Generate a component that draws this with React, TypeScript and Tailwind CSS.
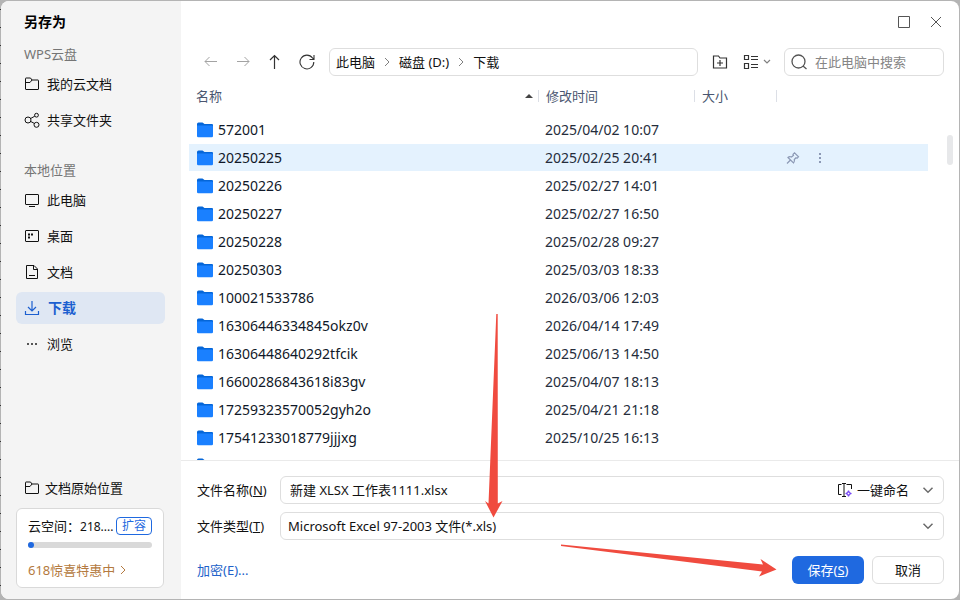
import type { ReactNode } from "react";

const files = [
  { name: "572001", date: "2025/04/02 10:07" },
  { name: "20250225", date: "2025/02/25 20:41", active: true },
  { name: "20250226", date: "2025/02/27 14:01" },
  { name: "20250227", date: "2025/02/27 16:50" },
  { name: "20250228", date: "2025/02/28 09:27" },
  { name: "20250303", date: "2025/03/03 18:33" },
  { name: "100021533786", date: "2026/03/06 12:03" },
  { name: "16306446334845okz0v", date: "2026/04/14 17:49" },
  { name: "16306448640292tfcik", date: "2025/06/13 14:50" },
  { name: "16600286843618i83gv", date: "2025/04/07 18:13" },
  { name: "17259323570052gyh2o", date: "2025/04/21 21:18" },
  { name: "17541233018779jjjxg", date: "2025/10/25 16:13" },
  { name: "", date: "" },
];

function Icon({ children, className = "" }: { children: ReactNode; className?: string }) {
  return (
    <svg
      width="16"
      height="16"
      viewBox="0 0 16 16"
      fill="none"
      stroke="currentColor"
      strokeWidth="1"
      aria-hidden="true"
      className={`shrink-0 ${className}`}
    >
      {children}
    </svg>
  );
}

const folderOutline = (
  <Icon>
    <path d="M1.500 13v-10.500q0-.5.5-.5h4.500l1.500 2H14q.5 0 .5.5v8.500q0 .5-.5.5H2q-.5 0-.5-.5zM1.500 6.500h4.500L8 4" />
  </Icon>
);

const chevronDown = (
  <Icon>
    <path d="M3.5 5.8 8 10.2l4.5-4.4" strokeWidth="1.5" />
  </Icon>
);

const crumbArrow = (
  <svg width="6" height="10" viewBox="0 0 6 10" fill="none" stroke="#808080" aria-hidden="true">
    <path d="M1 1l4 4-4 4" />
  </svg>
);

function FolderIcon() {
  return (
    <svg width="16" height="16" viewBox="0 0 16 16" aria-hidden="true" className="shrink-0">
      <path d="M0 2q0-1.5 1.5-1.5h4L7.5 2H15q1 0 1 1v4H0z" fill="#0566d8" />
      <path d="M0 3.5h15q1 0 1 1V14q0 1.3-1.3 1.3H1.3Q0 15.300 0 14z" fill="#1a80ff" />
    </svg>
  );
}

function NavItem({ icon, label, active }: { icon: ReactNode; label: string; active?: boolean }) {
  return (
    <button
      type="button"
      className={
        active
          ? "flex h-8 w-full items-center gap-2 rounded-md bg-[#dfe7f3] pl-2 text-sm font-bold text-[#1c5fd0]"
          : "flex h-8 w-full items-center gap-[7px] rounded-md pl-2 text-[#111]"
      }
    >
      {icon}
      {label}
    </button>
  );
}

function Sidebar() {
  return (
    <aside className="flex w-[180px] shrink-0 flex-col bg-[#f4f4f4] pt-[11px] pr-4 pb-[11px] pl-[15px]">
      <h1 className="pl-2 text-sm leading-5 font-bold text-black">另存为</h1>
      <h2 className="mt-3 mb-1 pl-2 leading-5 text-[#757575]">WPS云盘</h2>
      <nav className="flex flex-col gap-1">
        <NavItem label="我的云文档" icon={folderOutline} />
        <NavItem
          label="共享文件夹"
          icon={
            <Icon>
              <circle cx="4" cy="8" r="3" />
              <circle cx="12.500" cy="3.200" r="1.900" />
              <circle cx="12.500" cy="12.800" r="2.500" />
              <path d="M6.600 6.500 10.800 4.200M6.600 9.400l3.700 2" />
            </Icon>
          }
        />
      </nav>
      <h2 className="mt-6 mb-1 pl-2 leading-5 text-[#757575]">本地位置</h2>
      <nav className="flex flex-col gap-1">
        <NavItem
          label="此电脑"
          icon={
            <Icon>
              <rect x="1.500" y="2.500" width="13" height="10" rx=".5" />
              <path d="M5 14.500h6" />
            </Icon>
          }
        />
        <NavItem
          label="桌面"
          icon={
            <Icon>
              <rect x="1.500" y="2.500" width="13" height="11" rx=".5" />
              <path d="M4 6.500h2M7 6.500h2M4 9.500h2" strokeWidth="2" />
            </Icon>
          }
        />
        <NavItem
          label="文档"
          icon={
            <Icon>
              <path d="M2.500 1.500h7.500l3.500 3.500v9.500h-11zM9.500 1.500v4h4M5 11.500h6" />
            </Icon>
          }
        />
        <NavItem
          active
          label="下载"
          icon={
            <Icon>
              <path d="M1.500 11v3.500h13V11M8 1v9.500M4 7l4 4 4-4" strokeWidth="1.200" />
            </Icon>
          }
        />
        <NavItem
          label="浏览"
          icon={
            <Icon>
              <path d="M3 8h2M7 8h2M11 8h2" strokeWidth="2" stroke="#555" />
            </Icon>
          }
        />
      </nav>
      <div className="mt-auto">
        <button type="button" className="flex h-8 w-full items-center gap-[5px] pl-2 text-[#111]">
          {folderOutline}
          文档原始位置
        </button>
        <section className="mt-1 mr-px flex h-20 flex-col rounded-md border border-[#d9d9d9] bg-white px-[11px] pt-2">
          <div className="flex h-[18px] items-center justify-between">
            <span className="min-w-0 whitespace-nowrap text-[#111]">
              云空间：<span className="text-xs">218....</span>
            </span>
            <button
              type="button"
              className="h-[18px] w-9 shrink-0 rounded-[4px] border border-[#1f69e0] text-xs leading-4 text-[#1f69e0]"
            >
              扩容
            </button>
          </div>
          <div className="mt-[7px] h-[6px] rounded-full bg-[#d9d9d9]">
            <div className="h-[6px] w-[6px] rounded-full bg-[#1f69e0]" />
          </div>
          <a href="#promo" className="mt-3 flex items-center gap-[5px] leading-5 text-[#b47a40]">
            618惊喜特惠中
            <svg width="6" height="10" viewBox="0 0 6 10" fill="none" stroke="currentColor" aria-hidden="true">
              <path d="M1 1l4 4-4 4" />
            </svg>
          </a>
        </section>
      </div>
    </aside>
  );
}

function Toolbar() {
  return (
    <div className="flex h-7 items-center pr-[15px] pl-[22px] text-[#333]">
      <div className="flex gap-4">
        <button type="button" aria-label="后退" className="text-[#a3a3a3]">
          <Icon>
            <path d="M14 7.500H2M6.500 3 2 7.500 6.500 12" />
          </Icon>
        </button>
        <button type="button" aria-label="前进" className="text-[#a3a3a3]">
          <Icon>
            <path d="M2 7.500h12M9.500 3 14 7.500 9.500 12" />
          </Icon>
        </button>
        <button type="button" aria-label="上一级">
          <Icon>
            <path d="M7.500 15V1.500M3 6l4.500-4.500L12 6" strokeWidth="1.200" />
          </Icon>
        </button>
        <button type="button" aria-label="刷新">
          <Icon>
            <path d="M14.800 8a6.900 6.900 0 1 1-1.300-4L15 5.500M15 1v4.500h-4.500" strokeWidth="1.100" />
          </Icon>
        </button>
      </div>
      <nav
        aria-label="路径"
        className="ml-[14px] flex h-7 min-w-0 flex-1 items-center gap-[9px] rounded-md border border-[#dedede] pl-[6px] text-[#111]"
      >
        <a href="#pc">此电脑</a>
        {crumbArrow}
        <a href="#d">磁盘 (D:)</a>
        {crumbArrow}
        <a href="#downloads">下载</a>
      </nav>
      <button type="button" aria-label="新建文件夹" className="ml-[14px]">
        <Icon>
          <path d="M1.500 2h5l1.500 2h6.500v10h-13zM8 6v6M5 9h6" strokeWidth="1.200" />
        </Icon>
      </button>
      <button type="button" aria-label="视图" className="ml-[15px] flex items-center gap-1">
        <Icon>
          <path
            d="M1.500 1.500h4v4h-4zM1.500 9.500h4v5h-4zM8 2.500h7M8 5.500h7M8 10.500h7M8 13.500h7"
            strokeWidth="1.200"
          />
        </Icon>
        <svg width="8" height="6" viewBox="0 0 8 6" fill="none" stroke="#808080" aria-hidden="true">
          <path d="M1 1l3 3 3-3" strokeWidth="1.200" />
        </svg>
      </button>
      <label className="ml-[13px] flex h-7 w-40 items-center gap-2 rounded-md border border-[#dedede] pl-[6px] text-[#555]">
        <Icon>
          <circle cx="7.500" cy="7.500" r="6.500" strokeWidth="1.300" />
          <path d="M12 12l3.500 3" strokeWidth="1.300" />
        </Icon>
        <input
          type="search"
          aria-label="搜索"
          placeholder="在此电脑中搜索"
          className="min-w-0 flex-1 bg-transparent outline-none placeholder:text-[#858585]"
        />
      </label>
    </div>
  );
}

function FileList() {
  return (
    <div className="flex min-h-0 flex-1">
      <div className="min-w-0 flex-1 overflow-hidden pl-2">
        <table className="w-full table-fixed border-collapse text-left">
          <colgroup>
            <col className="w-[350px]" />
            <col className="w-[156px]" />
            <col className="w-[82px]" />
            <col />
          </colgroup>
          <thead>
            <tr className="h-10 text-[#4a5670]">
              <th className="p-0 font-normal">
                <div className="flex h-3 items-center justify-between border-r border-[#dcdfe6] pr-[5px] pl-[7px]">
                  名称
                  <svg width="8" height="4" viewBox="0 0 8 4" fill="#444" aria-hidden="true">
                    <path d="M4 0l4 4H0z" />
                  </svg>
                </div>
              </th>
              <th className="p-0 font-normal">
                <div className="flex h-3 items-center border-r border-[#dcdfe6] pl-[7px]">修改时间</div>
              </th>
              <th className="p-0 font-normal">
                <div className="flex h-3 items-center border-r border-[#dcdfe6] pl-[7px]">大小</div>
              </th>
              <td />
            </tr>
          </thead>
          <tbody className="text-sm leading-5 text-[#101828]">
            {files.map((file, i) => (
              <tr
                key={i}
                className={
                  file.active
                    ? "h-7 border-b border-white bg-[#e4f2fe] bg-clip-padding"
                    : "h-7"
                }
              >
                <td className="p-0">
                  <div className="flex items-center gap-[5px] pl-2">
                    <FolderIcon />
                    {file.name}
                  </div>
                </td>
                <td className="p-0 pl-[6px] whitespace-nowrap text-[#252d3c]">{file.date}</td>
                <td className="p-0" />
                <td className="p-0">
                  {file.active && (
                    <div className="flex items-center gap-[11px] pl-2 text-[#8c99b5]">
                      <button type="button" aria-label="固定">
                        <Icon>
                          <path
                            d="M2 13.500l3.500-3.500M3 7.500l5.500 5.500q1.500-1.500.8-3.500l1.700-1.700 1 .5 1.500-1.500-4-4L8 4.300l.5 1L6.500 7Q4.500 6 3 7.500z"
                            strokeWidth="1.200"
                          />
                        </Icon>
                      </button>
                      <button type="button" aria-label="更多">
                        <Icon>
                          <path d="M7 4h2M7 8h2M7 12h2" strokeWidth="2" />
                        </Icon>
                      </button>
                    </div>
                  )}
                </td>
              </tr>
            ))}
          </tbody>
        </table>
      </div>
      <div className="w-[31px] shrink-0 pt-[59px] pl-[19px]">
        <div className="h-[30px] w-[6px] rounded-full bg-[#e7e8ea]" />
      </div>
    </div>
  );
}

function SaveForm() {
  return (
    <form className="border-t border-[#eaeaea] py-[15px] pr-[15px] pl-4 text-[#111]">
      <div className="flex items-center">
        <label htmlFor="name" className="w-[83px] shrink-0">
          文件名称(<u>N</u>)
        </label>
        <div className="flex h-7 min-w-0 flex-1 items-center rounded-md border border-[#dedede] pr-[7px] pl-[9px]">
          <input
            id="name"
            defaultValue="新建 XLSX 工作表1111.xlsx"
            className="min-w-0 flex-1 bg-transparent outline-none"
          />
          <button type="button" className="mr-[11px] flex items-center gap-1">
            <Icon>
              <path d="M4.500 2.500h-3v10h3M5 1.500h4M5 14.500h4M7 1.500v13M9.500 2.500h5V7" />
              <path
                d="M11.500 8.500q.3 2.700 3 3-2.700.3-3 3-.3-2.700-3-3 2.700-.3 3-3z"
                stroke="#7646f5"
                strokeWidth="1.200"
              />
            </Icon>
            一键命名
          </button>
          <button type="button" aria-label="历史名称" className="text-[#6b6b6b]">
            {chevronDown}
          </button>
        </div>
      </div>
      <div className="mt-2 flex items-center">
        <label htmlFor="type" className="w-[83px] shrink-0">
          文件类型(<u>T</u>)
        </label>
        <div className="grid h-7 min-w-0 flex-1 grid-cols-1 items-center rounded-md border border-[#dedede] pr-[7px] text-[#6b6b6b]">
          <select
            id="type"
            className="col-start-1 row-start-1 w-full appearance-none bg-transparent pl-[7px] text-[#111] outline-none"
          >
            <option>Microsoft Excel 97-2003 文件(*.xls)</option>
          </select>
          <span className="pointer-events-none col-start-1 row-start-1 justify-self-end">{chevronDown}</span>
        </div>
      </div>
      <div className="mt-4 flex items-center gap-2">
        <a href="#encrypt" className="mr-auto text-[#2162c9]">
          加密(E)...
        </a>
        <button type="button" className="h-7 w-[72px] rounded-md bg-[#1f69e0] text-white">
          保存(<u>S</u>)
        </button>
        <button type="button" className="h-7 w-[72px] rounded-md border border-[#dedede]">
          取消
        </button>
      </div>
    </form>
  );
}

export default function App() {
  return (
    <div className="relative h-screen bg-[#b4b4b4] bg-[repeating-linear-gradient(#b4b4b4_0px,#b4b4b4_9px,#333_9px,#333_10px,#b4b4b4_10px,#b4b4b4_18px)] bg-[length:1px_100%] bg-no-repeat p-px font-['Noto_Sans','Noto_Sans_CJK_SC',sans-serif] text-[13px] leading-5">
      <div className="flex h-full overflow-hidden rounded-lg bg-white">
        <Sidebar />
        <main className="flex min-w-0 flex-1 flex-col">
          <header className="flex h-[47px] shrink-0 justify-end gap-4 pt-[13px] pr-[15px] text-[#555]">
            <button type="button" aria-label="最大化" className="h-4">
              <Icon>
                <path d="M2.500 2.500h11v11h-11z" />
              </Icon>
            </button>
            <button type="button" aria-label="关闭" className="h-4">
              <Icon>
                <path d="M3 3l10 10M13 3 3 13" />
              </Icon>
            </button>
          </header>
          <Toolbar />
          <FileList />
          <SaveForm />
        </main>
      </div>
      <svg
        width="960"
        height="600"
        viewBox="0 0 960 600"
        fill="#f04b3f"
        aria-hidden="true"
        className="pointer-events-none absolute top-0 left-0"
      >
        <path d="M496.300 314h1.400l.1 189.500 4.700-2.500-9 16.500L485 501l3.500 2.500z" />
        <path d="M561 544.500 763 564.500l-2.500-5.500 16 10.500-17.500 7 3-5L561 546z" />
      </svg>
    </div>
  );
}
